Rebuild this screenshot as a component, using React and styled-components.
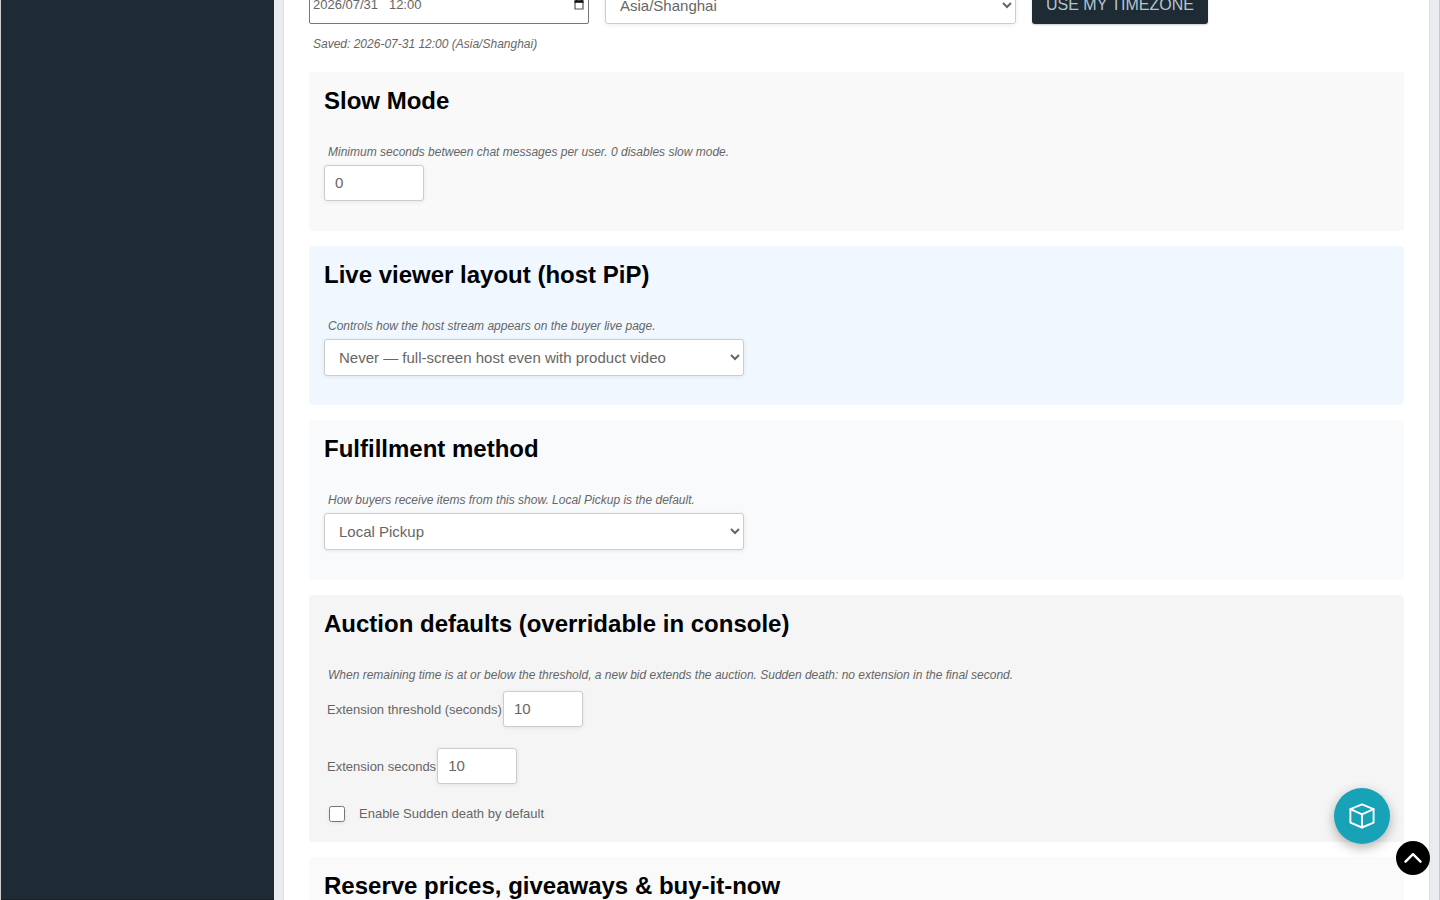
import React from "react";
import styled, { createGlobalStyle } from "styled-components";

const GlobalStyle = createGlobalStyle`
  *, *::before, *::after { box-sizing: border-box; }
  body {
    margin: 0;
    background: #ebecf1;
    color: #666;
    font-family: "Liberation Sans", Arial, sans-serif;
    font-size: 13px;
  }
`;

const Shell = styled.div`
  display: flex;
  height: 100vh;
  overflow: hidden;
  border-left: 1px solid #ccc;
  border-right: 1px solid #c8c8c8;
`;

const Sidebar = styled.aside`
  flex: 0 0 273px;
  background: #1e2b34;
  border-bottom: 1px solid #17212a;
`;

const Main = styled.main`
  flex: 1;
  min-width: 0;
  padding: 0 10px;
`;

const Panel = styled.form`
  min-height: 100%;
  margin-top: -13px;
  padding: 0 25px;
  background: #fff;
  box-shadow: 0 0 2px rgba(0, 0, 0, 0.15);
`;

const ScheduleRow = styled.div`
  display: flex;
  gap: 16px;
`;

const DateField = styled.div`
  display: flex;
  align-items: center;
  flex: 0 0 280px;
  height: 37px;
  padding: 0 4px 2px 3px;
  border: 1px solid #767676;
  border-radius: 2px;
  background: #fff;
`;

const DateInput = styled.input`
  flex: 1;
  min-width: 0;
  padding: 0;
  border: 0;
  outline: 0;
  background: transparent;
  color: #666;
  font: 13px "Liberation Sans", Arial, sans-serif;
`;

const PickerButton = styled.button`
  display: flex;
  padding: 0;
  border: 0;
  background: transparent;
`;

const Select = styled.select`
  display: block;
  width: ${(p) => p.$width}px;
  height: 37px;
  padding: 0 10px;
  border: 1px solid #ccc;
  border-radius: 3px;
  background: #fff;
  color: #666;
  box-shadow: 0 1px 4px rgba(0, 0, 0, 0.08);
  font: 15px "Liberation Sans", Arial, sans-serif;
`;

const TimezoneButton = styled.button`
  height: 37px;
  padding: 0 14px 2px;
  border: 0;
  border-radius: 3px;
  background: #1e2b34;
  color: #b4c5cf;
  box-shadow: 0 1px 2px rgba(0, 0, 0, 0.2);
  font: 16px "Liberation Sans", Arial, sans-serif;
  text-transform: uppercase;
  white-space: nowrap;
`;

const Hint = styled.p`
  margin: 0;
  padding-left: 4px;
  font-size: 12px;
  font-style: italic;
  line-height: 20px;
`;

const SavedHint = styled(Hint)`
  margin: 10px 0 18px;
`;

const Section = styled.section`
  margin-bottom: 15px;
  padding: 15px 15px ${(p) => p.$bottom}px;
  border-radius: 4px;
  background: ${(p) => p.$tone};
`;

const Title = styled.h2`
  margin: 0 0 28px;
  color: #000;
  font-size: 24px;
  line-height: 27px;
`;

const Field = styled.div`
  margin-top: ${(p) => p.$top}px;
  display: flex;
  align-items: center;
  gap: 1px;
`;

const FieldLabel = styled.label`
  padding-left: 3px;
`;

const NumberInput = styled.input`
  width: ${(p) => p.$width}px;
  height: 36px;
  padding: 0 10px 2px;
  border: 1px solid #ccc;
  border-radius: 3px;
  background: #fff;
  color: #666;
  box-shadow: 0 1px 4px rgba(0, 0, 0, 0.08);
  font: 15px "Liberation Sans", Arial, sans-serif;
`;

const CheckField = styled.label`
  display: flex;
  align-items: center;
  gap: 14px;
  margin-top: 22px;
  padding-left: 5px;
  line-height: 16px;
`;

const Checkbox = styled.input`
  width: 16px;
  height: 16px;
  margin: 0;
  box-shadow: 0 1px 4px rgba(0, 0, 0, 0.08);
`;

const RoundButton = styled.button`
  position: fixed;
  right: ${(p) => p.$right}px;
  bottom: ${(p) => p.$bottom}px;
  display: flex;
  align-items: center;
  justify-content: center;
  width: ${(p) => p.$size}px;
  height: ${(p) => p.$size}px;
  padding: 0;
  border: 0;
  border-radius: 50%;
  background: ${(p) => p.$fill};
  color: #fff;
  box-shadow: ${(p) => p.$shadow || "none"};
`;

function CalendarIcon() {
  return (
    <svg width="10" height="11" viewBox="0 0 10 11" fill="none" aria-hidden="true">
      <path d="M2.5 0v2M7.5 0v2" stroke="#222" />
      <path d="M1 3v7h8V3" stroke="#555" strokeWidth="1.2" />
      <path d="M0.4 1.2h9.2v2.6h-9.2z" fill="#111" />
    </svg>
  );
}

function BoxIcon() {
  return (
    <svg width="28" height="28" viewBox="0 0 28 28" fill="none" stroke="currentColor" strokeWidth="1.9" strokeLinejoin="round" strokeLinecap="round" aria-hidden="true">
      <path d="M14 2.4L25.6 7.1V20.6L14 25.5L2.4 20.6V7.1Z" />
      <path d="M2.4 7.2L14 12.3L25.6 7.2M14 12.3V25.5" />
    </svg>
  );
}

function ChevronUpIcon() {
  return (
    <svg width="20" height="12" viewBox="0 0 20 12" fill="none" stroke="currentColor" strokeWidth="2.4" strokeLinecap="round" strokeLinejoin="round" aria-hidden="true">
      <path d="M2.5 9.7L10 2.2L17.5 9.7" />
    </svg>
  );
}

export default function App() {
  return (
    <>
      <GlobalStyle />
      <Shell>
        <Sidebar />
        <Main>
          <Panel onSubmit={(e) => e.preventDefault()}>
            <ScheduleRow>
              <DateField>
                <DateInput aria-label="Start time" defaultValue={"2026/07/31\u00a0\u00a0\u00a012:00"} />
                <PickerButton type="button" aria-label="Open calendar">
                  <CalendarIcon />
                </PickerButton>
              </DateField>
              <Select $width={411} aria-label="Timezone">
                <option>Asia/Shanghai</option>
              </Select>
              <TimezoneButton type="button">Use my timezone</TimezoneButton>
            </ScheduleRow>
            <SavedHint>Saved: 2026-07-31 12:00 (Asia/Shanghai)</SavedHint>

            <Section $tone="#f9f9f9" $bottom={30}>
              <Title>Slow Mode</Title>
              <Hint as="label" htmlFor="slow">
                Minimum seconds between chat messages per user. 0 disables slow mode.
              </Hint>
              <Field $top={3}>
                <NumberInput id="slow" type="number" $width={100} defaultValue="0" />
              </Field>
            </Section>

            <Section $tone="#f0f7ff" $bottom={29}>
              <Title>Live viewer layout (host PiP)</Title>
              <Hint id="layout-hint">Controls how the host stream appears on the buyer live page.</Hint>
              <Field $top={3}>
                <Select $width={420} aria-labelledby="layout-hint">
                  <option>Never — full-screen host even with product video</option>
                </Select>
              </Field>
            </Section>

            <Section $tone="#f8fafc" $bottom={30}>
              <Title>Fulfillment method</Title>
              <Hint id="fulfillment-hint">How buyers receive items from this show. Local Pickup is the default.</Hint>
              <Field $top={3}>
                <Select $width={420} aria-labelledby="fulfillment-hint">
                  <option>Local Pickup</option>
                </Select>
              </Field>
            </Section>

            <Section $tone="#f5f5f5" $bottom={20}>
              <Title>Auction defaults (overridable in console)</Title>
              <Hint>
                When remaining time is at or below the threshold, a new bid extends the auction. Sudden death: no
                extension in the final second.
              </Hint>
              <Field $top={6}>
                <FieldLabel htmlFor="threshold">Extension threshold (seconds)</FieldLabel>
                <NumberInput id="threshold" type="number" $width={80} defaultValue="10" />
              </Field>
              <Field $top={21}>
                <FieldLabel htmlFor="extension">Extension seconds</FieldLabel>
                <NumberInput id="extension" type="number" $width={80} defaultValue="10" />
              </Field>
              <CheckField>
                <Checkbox type="checkbox" />
                Enable Sudden death by default
              </CheckField>
            </Section>

            <Section $tone="#fafafa" $bottom={30}>
              <Title>Reserve prices, giveaways &amp; buy-it-now</Title>
            </Section>
          </Panel>
        </Main>
      </Shell>
      <RoundButton type="button" aria-label="Products" $size={56} $right={50} $bottom={56} $fill="#17a2b8" $shadow="0 4px 12px rgba(0, 0, 0, 0.3)">
        <BoxIcon />
      </RoundButton>
      <RoundButton type="button" aria-label="Back to top" $size={34} $right={10} $bottom={25} $fill="#000">
        <ChevronUpIcon />
      </RoundButton>
    </>
  );
}
